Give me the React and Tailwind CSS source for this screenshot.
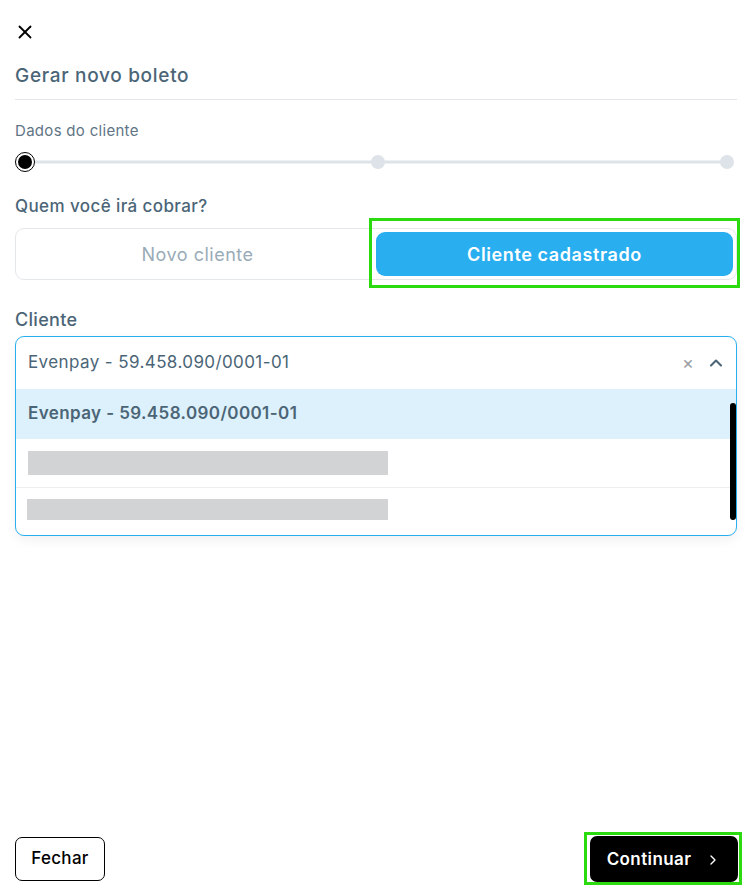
import { X, ChevronUp, ChevronRight } from 'lucide-react'

const font = { fontFamily: 'Inter, "Noto Sans", sans-serif' }

function Stepper() {
  return (
    <div className="relative mt-[11px] flex h-[20px] items-center justify-between">
      <div className="absolute left-[10px] right-[10px] top-1/2 h-[3px] -translate-y-1/2 bg-[#dde3e8]" />
      <div className="relative flex h-[20px] w-[20px] items-center justify-center rounded-full border border-black bg-white">
        <div className="h-[14px] w-[14px] rounded-full bg-black" />
      </div>
      <div className="relative h-[14px] w-[14px] rounded-full bg-[#dde3e8]" />
      <div className="relative mr-[3px] h-[14px] w-[14px] rounded-full bg-[#dde3e8]" />
    </div>
  )
}

export default function App() {
  return (
    <div className="flex h-[888px] flex-col bg-white px-[15px] text-[#4b6577]" style={font}>
      {/* header */}
      <div className="pt-[21px]">
        <X className="-ml-[1px] h-[22px] w-[22px] text-black" strokeWidth={2} />
      </div>
      <h1 className="mt-[21px] text-[19px] font-medium leading-[24px] tracking-[0.7px]">Gerar novo boleto</h1>
      <div className="mt-[11px] h-px bg-[#e3e6e9]" />

      {/* step */}
      <p className="mt-[21px] text-[15px] leading-[20px] tracking-[0.3px] text-[#5f7585]">Dados do cliente</p>
      <Stepper />

      <p className="mt-[23px] text-[17px] font-medium leading-[22px] tracking-[0.4px]">Quem você irá cobrar?</p>

      {/* segmented */}
      <div className="mt-[11px] flex h-[52px] items-stretch rounded-[9px] border border-[#e4e7ea] p-[3px]">
        <button className="flex flex-1 items-center justify-center text-[18px] tracking-[0.5px] text-[#9aabb8]">Novo cliente</button>
        <div className="relative flex flex-1">
          <div className="pointer-events-none absolute -bottom-[12px] -left-[7px] -right-[7px] -top-[14px] border-[3px] border-[#2bdb0f]" />
          <button className="flex flex-1 items-center justify-center rounded-[9px] bg-[#29aef0] text-[18px] font-semibold tracking-[0.6px] text-white">
            Cliente cadastrado
          </button>
        </div>
      </div>

      {/* cliente select */}
      <p className="mt-[28px] text-[18px] font-medium leading-[24px] tracking-[0.3px]">Cliente</p>
      <div className="mt-[4px] overflow-hidden rounded-[9px] border border-[#29aef0] bg-white shadow-[0_4px_12px_rgba(0,0,0,0.06)]">
        <div className="flex h-[52px] items-center pl-[12px] pr-[10px] shadow-[0_2px_6px_rgba(0,0,0,0.05)]">
          <span className="flex-1 text-[17px] tracking-[0.4px]">Evenpay - 59.458.090/0001-01</span>
          <span className="mr-[12px] text-[18px] leading-none text-[#9a9ea2]">×</span>
          <ChevronUp className="h-[20px] w-[20px] text-[#4b6577]" strokeWidth={2.5} />
        </div>
        <div className="relative">
          <div className="flex h-[50px] items-center bg-[#ddf1fc] pl-[12px] text-[17px] font-semibold tracking-[0.4px]">
            Evenpay - 59.458.090/0001-01
          </div>
          <div className="flex h-[49px] items-center border-b border-[#eeeeee] pl-[12px]">
            <div className="h-[24px] w-[360px] bg-[#d1d3d5]" />
          </div>
          <div className="flex h-[47px] items-start pl-[11px] pt-[11px]">
            <div className="h-[21px] w-[361px] bg-[#d1d3d5]" />
          </div>
          <div className="absolute right-0 top-[14px] h-[117px] w-[6px] rounded-full bg-black" />
        </div>
      </div>

      {/* footer */}
      <div className="mt-auto flex items-center justify-between pb-[6px]">
        <button className="flex h-[44px] w-[90px] items-center justify-center rounded-[7px] border border-black text-[17px] font-medium tracking-[0.3px] text-black">
          Fechar
        </button>
        <div className="relative mr-[-1px]">
          <div className="pointer-events-none absolute -bottom-[3px] -left-[6px] -right-[4px] -top-[4px] border-[3px] border-[#2bdb0f]" />
          <button className="flex h-[46px] w-[148px] items-center justify-center gap-[14px] rounded-[7px] bg-black pt-[2px] text-[17px] font-semibold tracking-[0.4px] text-white">
            Continuar
            <ChevronRight className="h-[16px] w-[16px]" strokeWidth={2} />
          </button>
        </div>
      </div>
    </div>
  )
}
